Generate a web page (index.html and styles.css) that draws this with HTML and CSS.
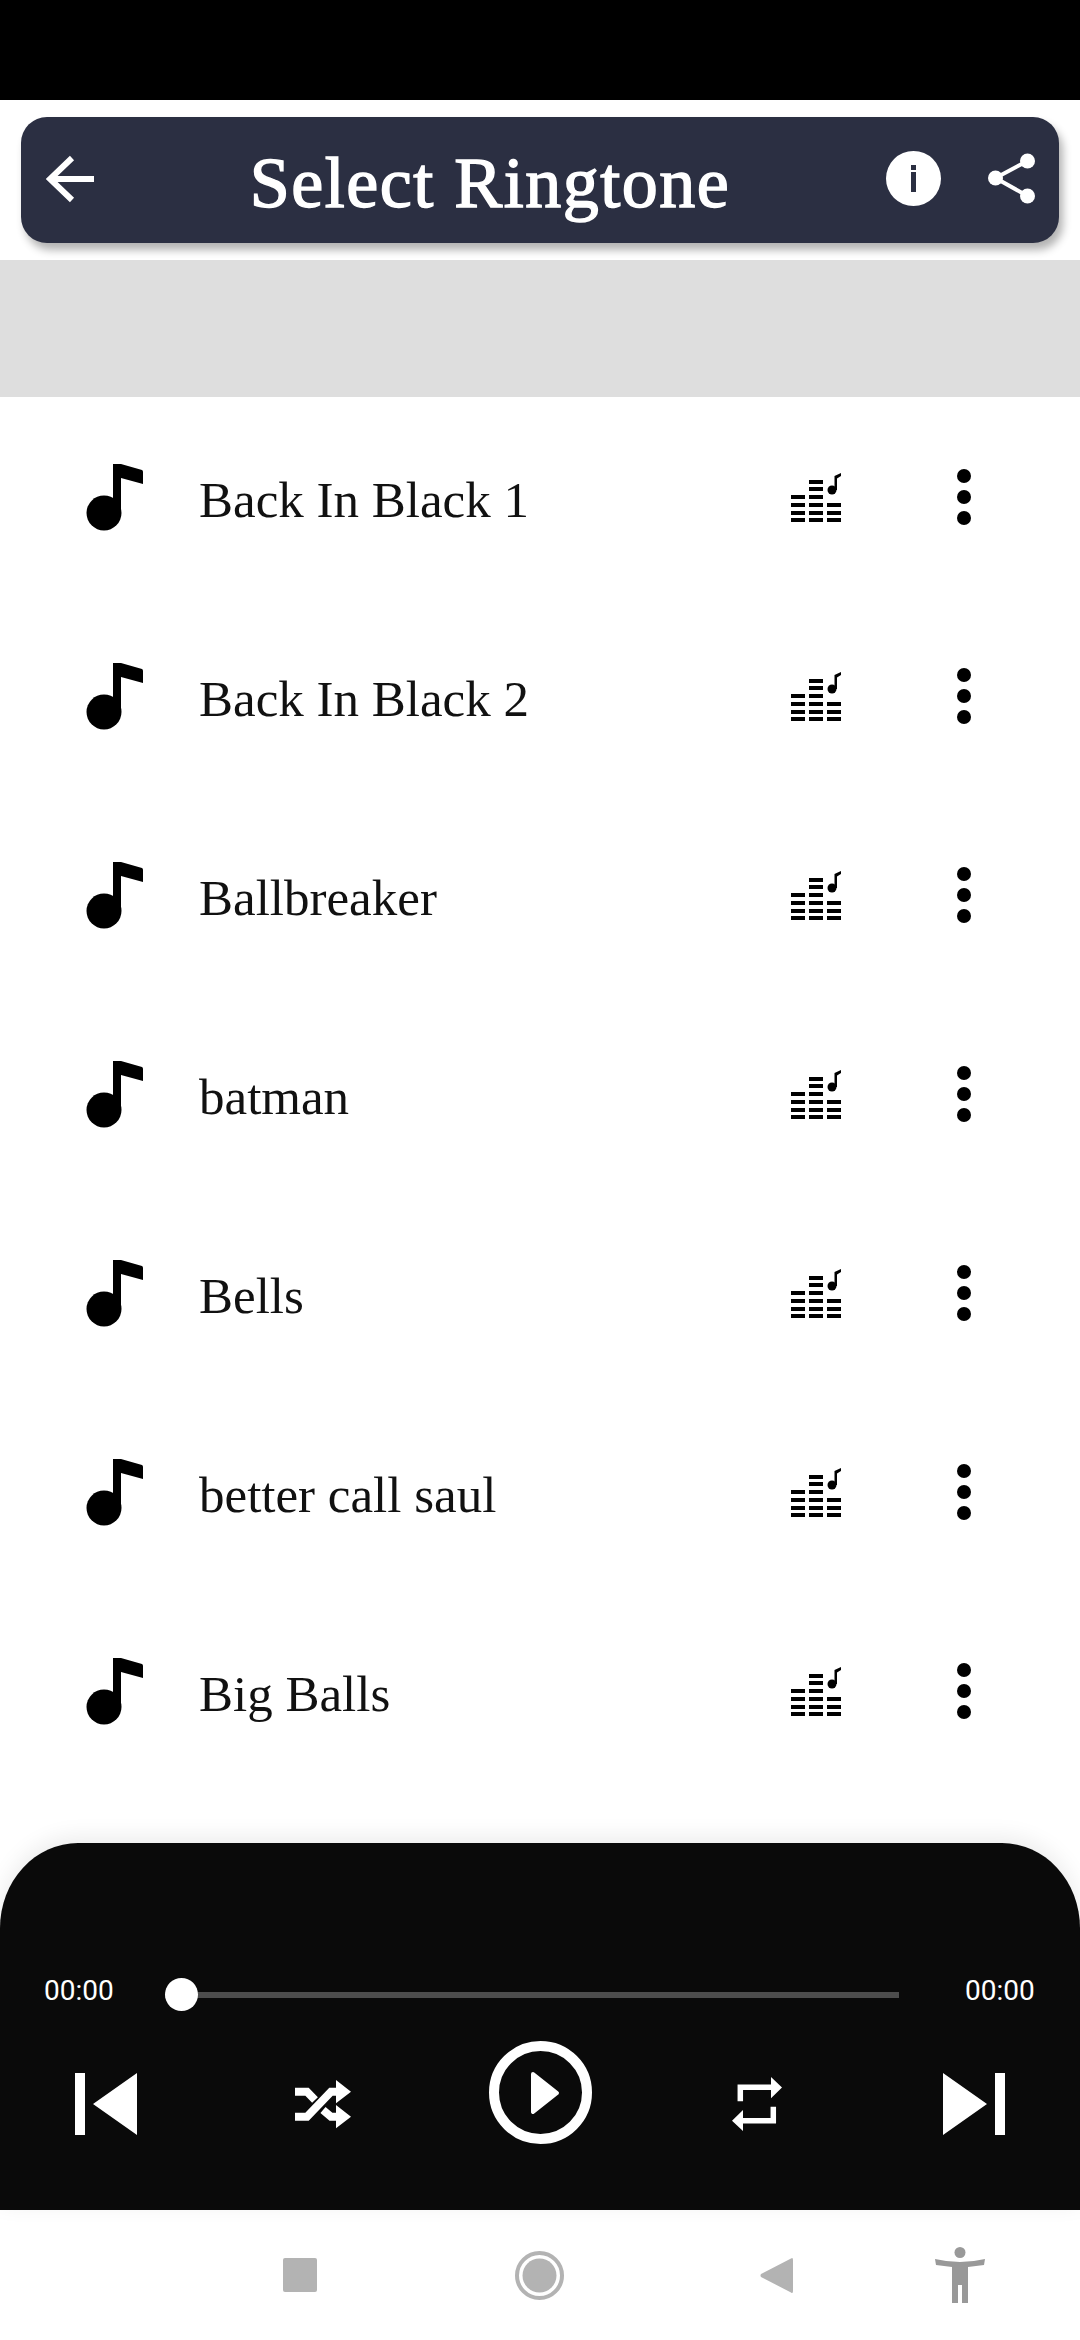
FILE: index.html
```html
<!DOCTYPE html>
<html lang="en">
<head>
    <meta charset="UTF-8">
    <meta name="viewport" content="width=device-width, initial-scale=1.0">
    <title>Select Ringtone</title>
    <link rel="stylesheet" href="styles.css">
</head>
<body>

    <!-- Shared row icons -->
    <svg class="defs" width="0" height="0">
        <symbol id="icon-note" viewBox="0 0 58 68">
            <circle cx="18" cy="50" r="17.5"/>
            <path d="M27 1H35L56 7Q57 7.500 57 9V21L35 15V50H27Z"/>
        </symbol>
        <symbol id="icon-eq" viewBox="0 0 50 50">
            <path d="M0 23h14v4H0zM0 31h14v4H0zM0 39h14v4H0zM0 46h14v4H0z"/>
            <path d="M18 8h14v4H18zM18 15h14v4H18zM18 23h14v4H18zM18 31h14v4H18zM18 39h14v4H18zM18 46h14v4H18z"/>
            <path d="M36 31h14v4H36zM36 39h14v4H36zM36 46h14v4H36z"/>
            <circle cx="41" cy="18" r="4.500"/>
            <path d="M43.500 18V4L50 1V4L46 6.500V18Z"/>
        </symbol>
        <symbol id="icon-dots" viewBox="0 0 14 56">
            <circle cx="7" cy="7" r="7"/>
            <circle cx="7" cy="28" r="7"/>
            <circle cx="7" cy="49" r="7"/>
        </symbol>
    </svg>

    <div class="status-bar"></div>

    <header class="app-bar">
        <svg class="back-icon" viewBox="0 0 48 48" fill="none" stroke="#fff" stroke-width="6">
            <path d="M48 24H4M26 3L4 24L26 45"/>
        </svg>
        <h1>Select Ringtone</h1>
        <svg class="info-icon" viewBox="0 0 55 55">
            <circle cx="27.500" cy="27.500" r="27.500" fill="#fff"/>
            <rect x="25" y="21" width="5" height="20" fill="#2b2f42"/>
            <rect x="25" y="14" width="5" height="5" fill="#2b2f42"/>
        </svg>
        <svg class="share-icon" viewBox="0 0 47 51" fill="#fff">
            <circle cx="39.500" cy="8" r="7.500"/>
            <circle cx="7.500" cy="25" r="7.500"/>
            <circle cx="39.500" cy="43" r="7.500"/>
            <path d="M39.500 8L7.500 25L39.500 43" fill="none" stroke="#fff" stroke-width="4"/>
        </svg>
    </header>

    <div class="ad-band"></div>

    <main class="ringtone-list">
        <div class="ringtone">
            <svg class="note"><use href="#icon-note"/></svg>
            <span class="name">Back In Black 1</span>
            <svg class="eq"><use href="#icon-eq"/></svg>
            <svg class="dots"><use href="#icon-dots"/></svg>
        </div>
        <div class="ringtone">
            <svg class="note"><use href="#icon-note"/></svg>
            <span class="name">Back In Black 2</span>
            <svg class="eq"><use href="#icon-eq"/></svg>
            <svg class="dots"><use href="#icon-dots"/></svg>
        </div>
        <div class="ringtone">
            <svg class="note"><use href="#icon-note"/></svg>
            <span class="name">Ballbreaker</span>
            <svg class="eq"><use href="#icon-eq"/></svg>
            <svg class="dots"><use href="#icon-dots"/></svg>
        </div>
        <div class="ringtone">
            <svg class="note"><use href="#icon-note"/></svg>
            <span class="name">batman</span>
            <svg class="eq"><use href="#icon-eq"/></svg>
            <svg class="dots"><use href="#icon-dots"/></svg>
        </div>
        <div class="ringtone">
            <svg class="note"><use href="#icon-note"/></svg>
            <span class="name">Bells</span>
            <svg class="eq"><use href="#icon-eq"/></svg>
            <svg class="dots"><use href="#icon-dots"/></svg>
        </div>
        <div class="ringtone">
            <svg class="note"><use href="#icon-note"/></svg>
            <span class="name">better call saul</span>
            <svg class="eq"><use href="#icon-eq"/></svg>
            <svg class="dots"><use href="#icon-dots"/></svg>
        </div>
        <div class="ringtone">
            <svg class="note"><use href="#icon-note"/></svg>
            <span class="name">Big Balls</span>
            <svg class="eq"><use href="#icon-eq"/></svg>
            <svg class="dots"><use href="#icon-dots"/></svg>
        </div>
    </main>

    <!-- Reproductor -->
    <section class="player">
        <div class="progress">
            <span class="time">00:00</span>
            <div class="track"><div class="thumb"></div></div>
            <span class="time">00:00</span>
        </div>
        <div class="controls">
            <svg class="skip" viewBox="0 0 62 62" fill="#fff">
                <path d="M0 0H10V62H0ZM18 31L62 0V62Z"/>
            </svg>
            <svg class="shuffle" viewBox="0 0 56 50">
                <path d="M0 12.700H12L20 21M0 37.700H12L36 12.700H44M28 31L36 37.700H44" fill="none" stroke="#fff" stroke-width="8"/>
                <path d="M41 1L56 12.700L41 24.300ZM41 26L56 37.700L41 49.300Z" fill="#fff"/>
            </svg>
            <svg class="play" viewBox="0 0 103 103">
                <circle cx="51.500" cy="51.500" r="46.500" fill="none" stroke="#fff" stroke-width="10"/>
                <path d="M44 33L68 52L44 71Z" fill="#fff" stroke="#fff" stroke-width="4" stroke-linejoin="round"/>
            </svg>
            <svg class="repeat" viewBox="0 0 50 54">
                <path d="M8.300 24.300V10.300H40M41.300 29.700V43.700H10" fill="none" stroke="#fff" stroke-width="5.500"/>
                <path d="M39 0L50 10.500L39 21.300ZM11 33L0 43.700L11 54Z" fill="#fff"/>
            </svg>
            <svg class="skip" viewBox="0 0 62 62" fill="#fff">
                <path d="M62 0H52V62H62ZM44 31L0 0V62Z"/>
            </svg>
        </div>
    </section>

    <nav class="nav-bar">
        <svg class="nav-stop" viewBox="0 0 34 34"><rect width="34" height="34" rx="2" fill="#b3b3b3"/></svg>
        <svg class="nav-home" viewBox="0 0 49 49">
            <circle cx="24.500" cy="24.500" r="22.500" fill="none" stroke="#b3b3b3" stroke-width="4"/>
            <circle cx="24.500" cy="24.500" r="17" fill="#b3b3b3"/>
        </svg>
        <svg class="nav-back" viewBox="0 0 33 37"><path d="M31 1.500Q33 0 33 3V34Q33 37 31 35.500L1 20Q0 18.500 1 17Z" fill="#b3b3b3"/></svg>
        <svg class="nav-access" viewBox="0 0 50 56" fill="#999">
            <ellipse cx="25" cy="5.500" rx="5.500" ry="5.500"/>
            <path d="M0 12Q25 18 50 12L49 18L33 20V56H27V38H23V56H17V20L1 18Z"/>
        </svg>
    </nav>

</body>
</html>
```

FILE: styles.css
```css
/* General */
body {
    margin: 0;
    background-color: #fff;
    font-family: 'Liberation Serif', serif;
    color: #111;
}

.defs {
    position: absolute;
}

.status-bar {
    height: 100px;
    background-color: #000;
}

/* Header */
.app-bar {
    display: flex;
    align-items: center;
    height: 126px;
    margin: 17px 21px;
    padding: 0 24px 0 25px;
    background-color: #2b2f42;
    border-radius: 26px;
    box-shadow: 4px 7px 8px rgba(0, 0, 0, 0.3);
}

.app-bar h1 {
    flex: 1;
    margin: 6px 0 0;
    color: #fff;
    font-size: 72px;
    font-weight: 400;
    letter-spacing: 1.5px;
    text-align: center;
    -webkit-text-stroke: 1.5px #fff;
}

.back-icon {
    width: 48px;
    height: 48px;
    margin-bottom: 2px;
}

.info-icon {
    width: 55px;
    height: 55px;
    margin-bottom: 4px;
}

.share-icon {
    width: 47px;
    height: 51px;
    margin-left: 47px;
    margin-bottom: 4px;
}

.ad-band {
    height: 137px;
    background-color: #dedede;
}

/* List */
.ringtone-list {
    height: 1446px;
}

.ringtone {
    display: flex;
    align-items: center;
    height: 199px;
    padding-left: 86px;
}

.ringtone .note {
    width: 58px;
    height: 68px;
    fill: #000;
}

.ringtone .name {
    width: 592px;
    margin-left: 55px;
    padding-top: 6px;
    font-size: 51px;
}

.ringtone .eq {
    width: 50px;
    height: 50px;
    fill: #000;
}

.ringtone .dots {
    width: 14px;
    height: 56px;
    margin-left: 116px;
    fill: #000;
}

/* Player */
.player {
    height: 367px;
    padding-top: 132px;
    box-sizing: border-box;
    overflow: hidden;
    background-color: #0a0a0a;
    border-radius: 78px 78px 0 0 / 85px 85px 0 0;
    box-shadow: 0 -6px 22px rgba(0, 0, 0, 0.08);
}

.progress {
    display: flex;
    align-items: center;
    height: 40px;
    padding: 0 45px 0 44px;
}

.time {
    width: 70px;
    margin-bottom: 10px;
    color: #fff;
    font-family: 'Roboto', sans-serif;
    font-size: 28px;
    white-space: nowrap;
}

.track {
    flex: 1;
    position: relative;
    height: 6px;
    margin: 0 66px 0 51px;
    background-color: #4d4d4d;
}

.thumb {
    position: absolute;
    left: 0;
    top: -14px;
    width: 33px;
    height: 33px;
    background-color: #fff;
    border-radius: 50%;
}

.controls {
    display: grid;
    grid-template-columns: repeat(5, 217px);
    justify-content: center;
    justify-items: center;
    align-items: center;
    height: 126px;
    margin-top: 26px;
}

.skip {
    width: 62px;
    height: 62px;
}

.shuffle {
    width: 56px;
    height: 50px;
}

.play {
    width: 103px;
    height: 103px;
    align-self: start;
}

.repeat {
    width: 50px;
    height: 54px;
}

/* Navigation */
.nav-bar {
    display: flex;
    align-items: center;
    height: 130px;
    padding-left: 283px;
    box-sizing: border-box;
}

.nav-stop {
    width: 34px;
    height: 34px;
}

.nav-home {
    width: 49px;
    height: 49px;
    margin-left: 198px;
}

.nav-back {
    width: 33px;
    height: 37px;
    margin-left: 196px;
}

.nav-access {
    width: 50px;
    height: 56px;
    margin-left: 142px;
}
```
